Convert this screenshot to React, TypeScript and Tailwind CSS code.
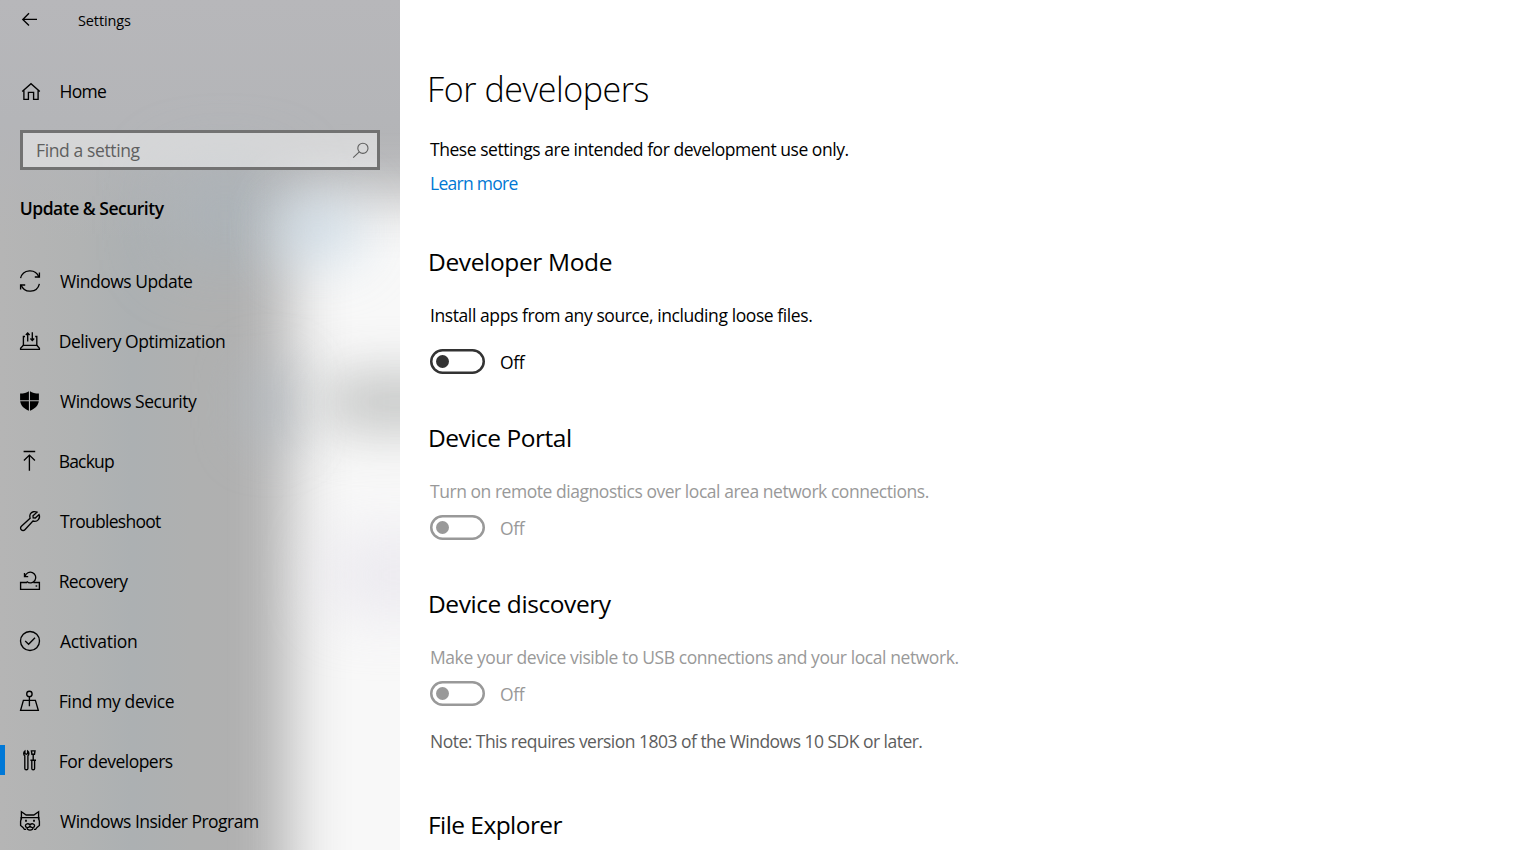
import { type ReactNode } from 'react';
import clsx from 'clsx';

interface IconProps {
  children: ReactNode;
}

function Icon({ children }: IconProps) {
  return (
    <svg
      className="w-6 h-6 shrink-0"
      viewBox="0 0 24 24"
      fill="none"
      stroke="currentColor"
      strokeWidth="1.35"
    >
      {children}
    </svg>
  );
}

interface NavItem {
  label: string;
  tracking: string;
  icon: ReactNode;
  active?: boolean;
}

const navItems: NavItem[] = [
  {
    label: 'Windows Update',
    tracking: 'ml-[18px] tracking-[-0.47px]',
    icon: (
      <>
        <path d="M2.6 9.2A9.6 9.6 0 0 1 20.9 8M21.4 14.8A9.6 9.6 0 0 1 3.1 16" />
        <path d="M21.4 3.4V8H16.8M2.6 20.6V16H7.2" />
      </>
    )
  },
  {
    label: 'Delivery Optimization',
    tracking: 'ml-[16.7px] tracking-[-0.44px]',
    icon: (
      <>
        <path d="M7 7.5H5.4V16.3H18.8V7.5H17.2" />
        <path d="M5.4 16.3L2.6 19.2V20.4H21.4V19.2L18.8 16.3" />
        <path d="M9.7 12.4V3.8M7.8 5.9L9.7 4L11.6 5.9M14.3 3.2V11.6M12.4 9.6L14.3 11.5L16.2 9.6" />
      </>
    )
  },
  {
    label: 'Windows Security',
    tracking: 'ml-[18px] tracking-[-0.49px]',
    icon: (
      <path
        d="M10.9 2.2C8.8 3.7 5.6 4.5 2.1 4.6V11.2H10.9ZM12 2.2C14.1 3.7 17.3 4.5 20.9 4.6V11.2H12ZM2.2 12.2C2.7 16.6 6.2 19.8 10.9 21.7V12.2ZM20.8 12.2C20.3 16.6 16.8 19.8 12 21.7V12.2Z"
        fill="currentColor"
        stroke="none"
      />
    )
  },
  {
    label: 'Backup',
    tracking: 'ml-[16.7px] tracking-[-0.81px]',
    icon: <path d="M5.6 2.5H17.2M11.4 21.8V6M5.9 11.6L11.4 6.1L16.9 11.6" />
  },
  {
    label: 'Troubleshoot',
    tracking: 'ml-[18px] tracking-[-0.74px]',
    icon: (
      <path d="M19 3.2C16.6 1.9 13.6 2.7 12.3 5C11.6 6.4 11.6 8 12.1 9.3L3.4 17.2C2.3 18.3 2.3 19.9 3.3 20.8C4.3 21.8 5.9 21.8 6.9 20.7L14.9 12C16.9 12.7 19.1 12.1 20.4 10.6C21.5 9.3 21.8 7.3 21 5.6L17.3 9L15.2 8.8L15 6.7Z" />
    )
  },
  {
    label: 'Recovery',
    tracking: 'ml-[16.7px] tracking-[-0.66px]',
    icon: (
      <>
        <path d="M9 13.5H2.6V20.4H21.4V13.5H15.4" />
        <path d="M7.1 7.3A5.4 5.4 0 1 1 8.8 12.6M6.5 3.9V7.6H10.2" />
        <path d="M17.6 17H19.2" />
      </>
    )
  },
  {
    label: 'Activation',
    tracking: 'ml-[18px] tracking-[-0.31px]',
    icon: (
      <>
        <circle cx="12" cy="12" r="9.5" />
        <path d="M7.2 12L10.6 15.2L17 8.8" />
      </>
    )
  },
  {
    label: 'Find my device',
    tracking: 'ml-[16.7px] tracking-[-0.38px]',
    icon: (
      <>
        <circle cx="11.4" cy="4.9" r="2.7" />
        <path d="M11.4 7.6V17.2M5.4 11.4H17.4L20.3 21.3H2.6Z" />
      </>
    )
  },
  {
    label: 'For developers',
    tracking: 'ml-[16.7px] tracking-[-0.53px]',
    active: true,
    icon: (
      <>
        <path d="M6.9 2V4.5L8.3 5.3L9.7 4.5V2C11.3 3.2 11.2 5.9 9.9 6.8V19.4C9.9 21.2 6.8 21.2 6.8 19.4V6.8C5.3 5.9 5.3 3.2 6.9 2Z" />
        <path d="M13.4 1.8H17L16.5 5.2H13.9ZM15.2 5.2V11M12.4 11.2H18M13.8 11.2V19.4C13.8 21.2 16.6 21.2 16.6 19.4V11.2" />
      </>
    )
  },
  {
    label: 'Windows Insider Program',
    tracking: 'ml-[18px] tracking-[-0.51px]',
    icon: (
      <>
        <path d="M3.4 10.5V2.8L8.2 6H15.8L20.6 2.8V10.5M2.4 8.6H21.6" />
        <path d="M3.4 9L2.6 12.4V16.4L5 18.4L6.4 20.4H8M20.6 9L21.4 12.4V16.4L19 18.4L17.6 20.4H16" />
        <path d="M8 10.8V12.8M16 10.8V12.8" strokeWidth="1.8" />
        <path d="M12 17C11 19.2 7.4 19 7.4 16.8C7.4 14.8 10.2 14 12 15.8C13.8 14 16.6 14.8 16.6 16.8C16.6 19 13 19.2 12 17ZM8.8 19.2C9.4 21.8 14.6 21.8 15.2 19.2" />
      </>
    )
  }
];

function Backdrop() {
  return (
    <div className="absolute inset-0 -z-10 overflow-hidden bg-[linear-gradient(90deg,#b5b5b5_0%,#b1b3b3_20%,#acb0b2_33%,#afb0b0_48%,#b0b0b0_62%,#b2b2b2_100%)]">
      <div className="absolute inset-x-0 top-0 h-[240px] bg-[linear-gradient(180deg,#b7b7ba_0%,#b4b5b8_50%,#b4b5b800_100%)]" />
      <div className="absolute left-[170px] top-[170px] w-[110px] h-[90px] bg-[#a9b5be] opacity-60 blur-[35px]" />
      <div className="absolute left-[290px] top-[196px] w-[240px] h-[800px] bg-[#f8f8f8] blur-[30px]" />
      <div className="absolute left-[275px] top-[200px] w-[85px] h-[60px] bg-[#c6d8e6] opacity-70 blur-[27px]" />
      <div className="absolute left-[245px] top-[365px] w-[50px] h-[80px] bg-[#b0b8bf] opacity-60 blur-[25px]" />
      <div className="absolute left-[325px] top-[376px] w-[180px] h-[52px] bg-[#b9bbba] opacity-90 blur-[27px]" />
      <div className="absolute left-[325px] top-[535px] w-[160px] h-[80px] bg-[#e4e1ea] opacity-60 blur-[30px]" />
    </div>
  );
}

function Sidebar() {
  return (
    <aside className="relative isolate w-[400px] h-full shrink-0 overflow-hidden">
      <Backdrop />

      <header className="flex items-center h-10 pl-[18px]">
        <Icon>
          <path d="M19 11.4H4.8M11 5.2L4.8 11.4L11 17.6" />
        </Icon>
        <span className="ml-9 pt-0.5 text-[14.5px] tracking-[-0.12px]">Settings</span>
      </header>

      <div className="flex items-center h-10 mt-[31px] pl-[18px]">
        <Icon>
          <path d="M4.2 12.6L13 4.7L21.8 12.6M5.9 11.2V20.4H10.4V13.4H15.6V20.4H20.1V11.2" />
        </Icon>
        <span className="ml-[17.5px] tracking-[-0.71px]">Home</span>
      </div>

      <div className="flex items-center justify-between h-10 mt-[19px] mx-5 pl-[13px] pr-[5px] border-3 border-[#727272] bg-white/45 bg-clip-padding text-[#5f5f5f]">
        <span className="tracking-[-0.38px]">Find a setting</span>
        <svg className="w-6 h-6" viewBox="0 0 24 24" fill="none" stroke="currentColor" strokeWidth="1.1">
          <circle cx="14.9" cy="10.3" r="5.1" />
          <path d="M11.3 13.9L5.2 19.6" />
        </svg>
      </div>

      <h2 className="mt-[26px] pl-[19.8px] leading-6 font-semibold tracking-[-0.5px]">Update &amp; Security</h2>

      <nav className="mt-[31px]">
        {navItems.map((item) => (
          <a key={item.label} className="flex items-center h-[60px]">
            <span className={clsx('w-[5px] h-[30px] mr-[13px] mb-0.5', item.active && 'bg-[#0078d7]')} />
            <Icon>{item.icon}</Icon>
            <span className={clsx('whitespace-nowrap', item.tracking)}>{item.label}</span>
          </a>
        ))}
      </nav>
    </aside>
  );
}

function Toggle({ disabled = false }: { disabled?: boolean }) {
  return (
    <div className="flex items-center h-[25px] pl-0.5">
      <svg
        className={clsx('w-[55px] h-[25px]', disabled ? 'text-[#999999]' : 'text-[#333333]')}
        viewBox="0 0 55 25"
        fill="none"
      >
        <rect x="1.25" y="1.25" width="52.5" height="22.5" rx="11.25" stroke="currentColor" strokeWidth="2.5" />
        <circle cx="12.5" cy="12.5" r="6.5" fill="currentColor" />
      </svg>
      <span className={clsx('ml-[15px] tracking-[-0.4px]', disabled ? 'text-[#999999]' : 'text-black')}>Off</span>
    </div>
  );
}

export default function App() {
  return (
    <div className="flex w-full h-screen overflow-hidden bg-white text-black text-[17.5px] leading-6 font-['Open_Sans','Noto_Sans',sans-serif]">
      <Sidebar />

      <main className="flex-1 pl-7 pt-[67px] whitespace-nowrap">
        <h1 className="-ml-px text-[34px] leading-[44px] font-light tracking-[-0.42px]">For developers</h1>
        <p className="mt-[26px] pl-0.5 tracking-[-0.46px]">These settings are intended for development use only.</p>
        <a className="block mt-2.5 pl-0.5 text-[#0078d4] tracking-[-0.72px]">Learn more</a>

        <section className="mt-[51px]">
          <h2 className="text-[24.5px] leading-8 tracking-[-0.36px]">Developer Mode</h2>
          <p className="mt-[25px] mb-[22px] pl-0.5 tracking-[-0.41px]">
            Install apps from any source, including loose files.
          </p>
          <Toggle />
        </section>

        <section className="mt-12">
          <h2 className="text-[24.5px] leading-8 tracking-[-0.48px]">Device Portal</h2>
          <p className="mt-[25px] mb-3 pl-0.5 text-[#999999] tracking-[-0.46px]">
            Turn on remote diagnostics over local area network connections.
          </p>
          <Toggle disabled />
        </section>

        <section className="mt-12">
          <h2 className="text-[24.5px] leading-8 tracking-[-0.42px]">Device discovery</h2>
          <p className="mt-[25px] mb-3 pl-0.5 text-[#999999] tracking-[-0.42px]">
            Make your device visible to USB connections and your local network.
          </p>
          <Toggle disabled />
          <p className="mt-[23px] pl-0.5 text-[#5d5d5d] tracking-[-0.52px]">
            Note: This requires version 1803 of the Windows 10 SDK or later.
          </p>
        </section>

        <section className="mt-14">
          <h2 className="text-[24.5px] leading-8 tracking-[-0.56px]">File Explorer</h2>
        </section>
      </main>
    </div>
  );
}
